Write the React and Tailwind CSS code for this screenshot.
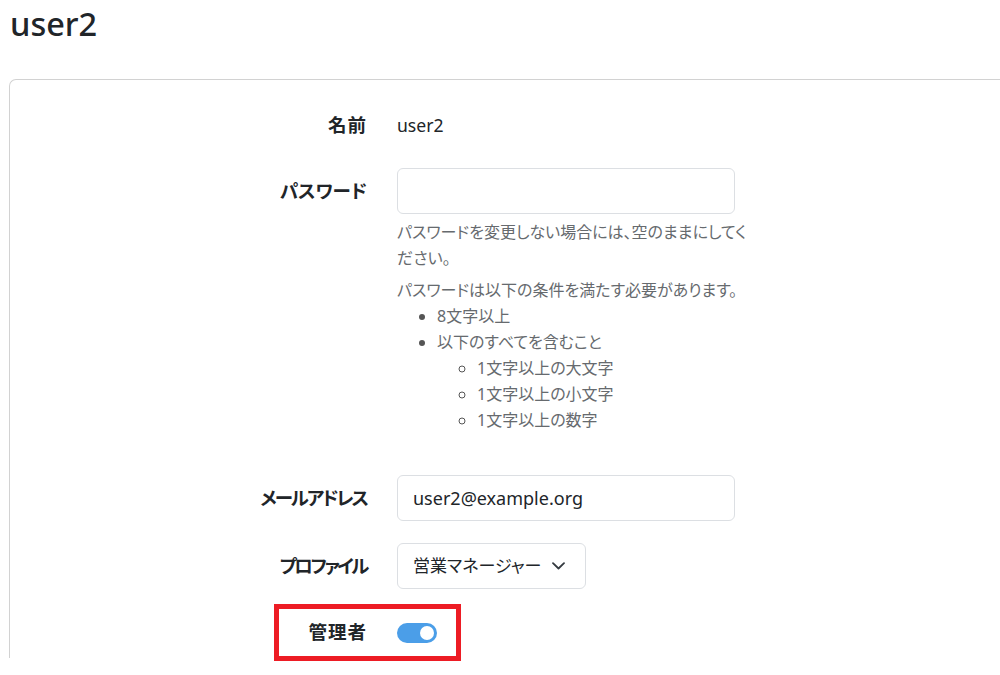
import React from "react";

const font = { fontFamily: '"Noto Sans", "Noto Sans CJK JP", sans-serif' };

export default function App() {
  return (
    <div
      className="relative w-[1000px] h-[675px] overflow-hidden bg-white text-[#212529] text-[17.6px] leading-[26.4px] [font-feature-settings:'palt']"
      style={font}
    >
      <h1 className="ml-[10px] pt-[4px] text-[32.5px] leading-[40px] font-medium mb-[35px]">user2</h1>

      <div className="ml-[9px] w-[1100px] h-[579px] border-l border-t border-[#d2d2d2] rounded-tl-[7px]">
        {/* 名前 */}
        <div className="flex pt-[32px]">
          <div className="w-[357px] text-right font-bold text-[18.5px] tracking-[1px]">名前</div>
          <div className="ml-[30px]">user2</div>
        </div>

        {/* パスワード */}
        <div className="flex mt-[30px]">
          <div className="w-[357px] text-right font-bold text-[18.5px] pt-[10px]">パスワード</div>
          <div className="ml-[30px]">
            <input
              type="password"
              className="block w-[338px] h-[46px] rounded-[6px] border border-[#dcdfe3] outline-none px-[15px]"
            />
            <div className="text-[#666a6e] text-[16px] leading-[26px] whitespace-nowrap">
              <p className="mt-[5px]">
                パスワードを変更しない場合には、空のままにしてく
                <br />
                ださい。
              </p>
              <p className="mt-[6px]">パスワードは以下の条件を満たす必要があります。</p>
              <ul className="list-disc pl-[40px] marker:text-[#555]">
                <li>8文字以上</li>
                <li>
                  以下のすべてを含むこと
                  <ul className="list-[circle] pl-[40px]">
                    <li>1文字以上の大文字</li>
                    <li>1文字以上の小文字</li>
                    <li>1文字以上の数字</li>
                  </ul>
                </li>
              </ul>
            </div>
          </div>
        </div>

        {/* メールアドレス */}
        <div className="flex items-center mt-[42px]">
          <div className="w-[357px] text-right font-bold text-[18.5px] tracking-[-2px]">メールアドレス</div>
          <div className="ml-[30px]">
            <input
              type="text"
              defaultValue="user2@example.org"
              className="block w-[338px] h-[46px] rounded-[6px] border border-[#dcdfe3] outline-none px-[15px] text-[#212529] text-[18px]"
              style={font}
            />
          </div>
        </div>

        {/* プロファイル */}
        <div className="flex items-center mt-[22px]">
          <div className="w-[357px] text-right font-bold text-[18.5px] tracking-[-2.4px]">プロファイル</div>
          <div className="ml-[30px]">
            <div className="flex items-center w-[189px] h-[46px] rounded-[6px] border border-[#dcdfe3] pl-[15px] pr-[20px]">
              <span className="flex-1 whitespace-nowrap text-[17px]">営業マネージャー</span>
              <svg width="13" height="8" viewBox="0 0 13 8" fill="none" className="shrink-0">
                <path d="M1 1.2 L6.5 6.5 L12 1.2" stroke="#343a40" strokeWidth="1.8" strokeLinecap="round" strokeLinejoin="round" />
              </svg>
            </div>
          </div>
        </div>

        {/* 管理者 */}
        <div className="flex items-center mt-[30px]">
          <div className="w-[357px] text-right font-bold text-[18.5px] tracking-[1px]">管理者</div>
          <div className="ml-[30px] flex items-center">
            <div className="relative w-[40px] h-[20px] rounded-full bg-[#4b9ee8]">
              <div className="absolute right-[3px] top-[3px] w-[14px] h-[14px] rounded-full bg-white" />
            </div>
          </div>
        </div>
      </div>

      <div className="absolute left-[274px] top-[604px] w-[187px] h-[57px] border-[5px] border-[#ed1c24]" />
    </div>
  );
}
